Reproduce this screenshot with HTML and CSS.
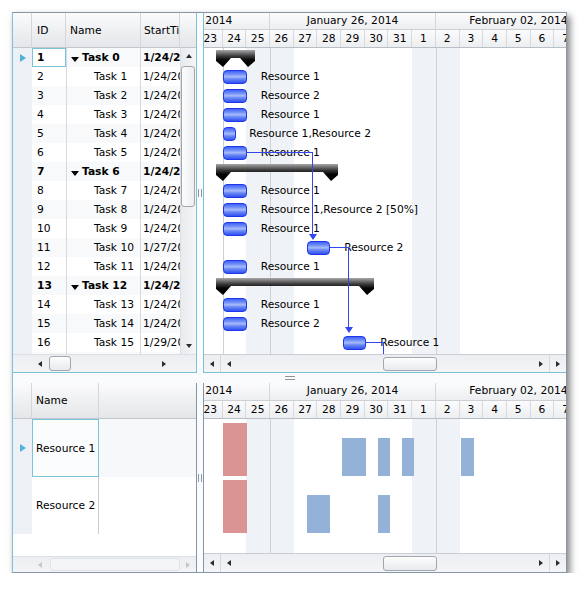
FILE: index.html
```html
<!DOCTYPE html>
<html>
<head>
<meta charset="utf-8">
<link rel="stylesheet" href="styles.css">
</head>
<body>
<div class="window">
  <div class="top">
    <div class="grid-pane focus">
      <div class="grid-head">
        <div class="hc w-rh"></div>
        <div class="hc w-id">ID</div>
        <div class="hc w-name">Name</div>
        <div class="hc w-start">StartTime</div>
        <div class="hc w-vs"></div>
      </div>
      <div class="grid-body">
        <div class="rows">
          <div class="row sum"><div class="cell w-rh"><span class="ind"></span></div><div class="cell w-id cur">1</div><div class="cell w-name l0"><span class="exp"></span>Task 0</div><div class="cell w-start">1/24/2014</div></div>
          <div class="row"><div class="cell w-rh"></div><div class="cell w-id">2</div><div class="cell w-name l1">Task 1</div><div class="cell w-start">1/24/2014</div></div>
          <div class="row"><div class="cell w-rh"></div><div class="cell w-id">3</div><div class="cell w-name l1">Task 2</div><div class="cell w-start">1/24/2014</div></div>
          <div class="row"><div class="cell w-rh"></div><div class="cell w-id">4</div><div class="cell w-name l1">Task 3</div><div class="cell w-start">1/24/2014</div></div>
          <div class="row"><div class="cell w-rh"></div><div class="cell w-id">5</div><div class="cell w-name l1">Task 4</div><div class="cell w-start">1/24/2014</div></div>
          <div class="row"><div class="cell w-rh"></div><div class="cell w-id">6</div><div class="cell w-name l1">Task 5</div><div class="cell w-start">1/24/2014</div></div>
          <div class="row sum"><div class="cell w-rh"></div><div class="cell w-id">7</div><div class="cell w-name l0"><span class="exp"></span>Task 6</div><div class="cell w-start">1/24/2014</div></div>
          <div class="row"><div class="cell w-rh"></div><div class="cell w-id">8</div><div class="cell w-name l1">Task 7</div><div class="cell w-start">1/24/2014</div></div>
          <div class="row"><div class="cell w-rh"></div><div class="cell w-id">9</div><div class="cell w-name l1">Task 8</div><div class="cell w-start">1/24/2014</div></div>
          <div class="row"><div class="cell w-rh"></div><div class="cell w-id">10</div><div class="cell w-name l1">Task 9</div><div class="cell w-start">1/24/2014</div></div>
          <div class="row"><div class="cell w-rh"></div><div class="cell w-id">11</div><div class="cell w-name l1">Task 10</div><div class="cell w-start">1/27/2014</div></div>
          <div class="row"><div class="cell w-rh"></div><div class="cell w-id">12</div><div class="cell w-name l1">Task 11</div><div class="cell w-start">1/24/2014</div></div>
          <div class="row sum"><div class="cell w-rh"></div><div class="cell w-id">13</div><div class="cell w-name l0"><span class="exp"></span>Task 12</div><div class="cell w-start">1/24/2014</div></div>
          <div class="row"><div class="cell w-rh"></div><div class="cell w-id">14</div><div class="cell w-name l1">Task 13</div><div class="cell w-start">1/24/2014</div></div>
          <div class="row"><div class="cell w-rh"></div><div class="cell w-id">15</div><div class="cell w-name l1">Task 14</div><div class="cell w-start">1/24/2014</div></div>
          <div class="row"><div class="cell w-rh"></div><div class="cell w-id">16</div><div class="cell w-name l1">Task 15</div><div class="cell w-start">1/29/2014</div></div>
          <div class="row"><div class="cell w-rh"></div><div class="cell w-id">17</div><div class="cell w-name l1">Task 16</div><div class="cell w-start">1/24/2014</div></div>
        </div>
        <div class="vscroll">
          <div class="vbtn"><span class="arr-u"></span></div>
          <div class="vtrack"><div class="vthumb"></div></div>
          <div class="vbtn"><span class="arr-d"></span></div>
        </div>
      </div>
      <div class="hs-row">
        <div class="hs-rh"></div>
        <div class="hscroll">
          <div class="sbtn"><span class="arr-l"></span></div>
          <div class="strack"><div class="sthumb grid-thumb"></div></div>
          <div class="sbtn"><span class="arr-r"></span></div>
        </div>
        <div class="hs-gap"></div>
      </div>
    </div>
    <div class="vsplit"><span class="grip-v"></span></div>
    <div class="gantt-pane focus">
      <div class="tl-head">
        <div class="track">
          <div class="months"><div class="mc">January 19, 2014</div><div class="mc">January 26, 2014</div><div class="mc">February 02, 2014</div></div>
          <div class="days"><div class="dc">19</div><div class="dc">20</div><div class="dc">21</div><div class="dc">22</div><div class="dc">23</div><div class="dc">24</div><div class="dc">25</div><div class="dc">26</div><div class="dc">27</div><div class="dc">28</div><div class="dc">29</div><div class="dc">30</div><div class="dc">31</div><div class="dc">1</div><div class="dc">2</div><div class="dc">3</div><div class="dc">4</div><div class="dc">5</div><div class="dc">6</div><div class="dc">7</div><div class="dc">8</div></div>
        </div>
      </div>
      <div class="tl-body">
        <div class="track canvas">
          <div class="shade" style="left:142.2px;width:47.4px"></div>
          <div class="shade" style="left:308.1px;width:47.4px"></div>
          <div class="vline" style="left:118.5px"></div>
          <div class="vline" style="left:165.9px"></div>
          <div class="vline" style="left:331.8px"></div>

          <svg class="summary" style="left:112px;top:2px" width="39" height="17" viewBox="0 0 39 17"><defs><linearGradient id="sg" x1="0" y1="0" x2="0" y2="1"><stop offset="0" stop-color="#a8a8a8"/><stop offset="0.35" stop-color="#3c3c3c"/><stop offset="0.6" stop-color="#050505"/><stop offset="1" stop-color="#000"/></linearGradient></defs><polygon points="0,0 39,0 39,11 32,17 24,8 15,8 7,17 0,11" fill="url(#sg)"/></svg>
          <div class="bar" style="left:119px;width:24px;top:22px"></div><div class="lbl" style="left:156.5px;top:19px">Resource 1</div>
          <div class="bar" style="left:119px;width:24px;top:41px"></div><div class="lbl" style="left:156.5px;top:38px">Resource 2</div>
          <div class="bar" style="left:119px;width:24px;top:60px"></div><div class="lbl" style="left:156.5px;top:57px">Resource 1</div>
          <div class="bar" style="left:119px;width:12.5px;top:79px"></div><div class="lbl" style="left:145px;top:76px">Resource 1,Resource 2</div>
          <div class="bar" style="left:119px;width:24px;top:98px"></div><div class="lbl" style="left:156.5px;top:95px">Resource 1</div>

          <svg class="summary" style="left:112px;top:116px" width="122" height="17" viewBox="0 0 122 17"><polygon points="0,0 122,0 122,11 115,17 107,8 15,8 7,17 0,11" fill="url(#sg)"/></svg>
          <div class="bar" style="left:119px;width:24px;top:136px"></div><div class="lbl" style="left:156.5px;top:133px">Resource 1</div>
          <div class="bar" style="left:119px;width:24px;top:155px"></div><div class="lbl" style="left:156.5px;top:152px">Resource 1,Resource 2 [50%]</div>
          <div class="bar" style="left:119px;width:24px;top:174px"></div><div class="lbl" style="left:156.5px;top:171px">Resource 1</div>
          <div class="bar" style="left:202.5px;width:23.5px;top:193px"></div><div class="lbl" style="left:240px;top:190px">Resource 2</div>
          <div class="bar" style="left:119px;width:24px;top:212px"></div><div class="lbl" style="left:156.5px;top:209px">Resource 1</div>

          <svg class="summary" style="left:112px;top:230px" width="158" height="17" viewBox="0 0 158 17"><polygon points="0,0 158,0 158,11 151,17 143,8 15,8 7,17 0,11" fill="url(#sg)"/></svg>
          <div class="bar" style="left:119px;width:24px;top:250px"></div><div class="lbl" style="left:156.5px;top:247px">Resource 1</div>
          <div class="bar" style="left:119px;width:24px;top:269px"></div><div class="lbl" style="left:156.5px;top:266px">Resource 2</div>
          <div class="bar" style="left:238.5px;width:23.5px;top:288px"></div><div class="lbl" style="left:276px;top:285px">Resource 1</div>

          <div class="hl" style="left:143px;width:65px;top:104px"></div>
          <div class="vl" style="left:208px;top:104px;height:83px"></div>
          <div class="arrow" style="left:204.5px;top:186px"></div>

          <div class="hl" style="left:226px;width:18px;top:199px"></div>
          <div class="vl" style="left:244px;top:199px;height:80px"></div>
          <div class="arrow" style="left:240.5px;top:279px"></div>

          <div class="hl" style="left:262px;width:17px;top:294px"></div>
          <div class="vl" style="left:279px;top:294px;height:20px"></div>
        </div>
      </div>
      <div class="gscroll">
        <div class="gbtn first"><span class="arr-l"></span></div>
        <div class="ginner">
          <div class="gbtn"><span class="arr-l"></span></div>
          <div class="gtrack"><div class="sthumb gantt-thumb"></div></div>
          <div class="gbtn"><span class="arr-r"></span></div>
        </div>
        <div class="gbtn last"><span class="arr-r"></span></div>
      </div>
    </div>
  </div>

  <div class="hsplit"><span class="grip-h"></span></div>

  <div class="bottom">
    <div class="res-pane">
      <div class="res-head">
        <div class="hc w-rh"></div>
        <div class="hc w-rname">Name</div>
        <div class="hc w-rest"></div>
      </div>
      <div class="res-row r1">
        <div class="cell w-rh"><span class="ind"></span></div>
        <div class="cell w-rname cur">Resource 1</div>
        <div class="cell w-rest"></div>
      </div>
      <div class="res-row r2">
        <div class="cell w-rh"></div>
        <div class="cell w-rname">Resource 2</div>
        <div class="cell w-rest"></div>
      </div>
      <div class="res-fill"></div>
      <div class="res-scroll">
        <div class="hs-rh"></div>
        <div class="sbtn dis"><span class="arr-l"></span></div>
        <div class="strack"><div class="sthumb dis-thumb"></div></div>
        <div class="sbtn dis"><span class="arr-r"></span></div>
      </div>
    </div>
    <div class="vsplit"><span class="grip-v"></span></div>
    <div class="rgantt-pane">
      <div class="tl-head rh36">
        <div class="track">
          <div class="months"><div class="mc">January 19, 2014</div><div class="mc">January 26, 2014</div><div class="mc">February 02, 2014</div></div>
          <div class="days"><div class="dc">19</div><div class="dc">20</div><div class="dc">21</div><div class="dc">22</div><div class="dc">23</div><div class="dc">24</div><div class="dc">25</div><div class="dc">26</div><div class="dc">27</div><div class="dc">28</div><div class="dc">29</div><div class="dc">30</div><div class="dc">31</div><div class="dc">1</div><div class="dc">2</div><div class="dc">3</div><div class="dc">4</div><div class="dc">5</div><div class="dc">6</div><div class="dc">7</div><div class="dc">8</div></div>
        </div>
      </div>
      <div class="tl-body rbody">
        <div class="track canvas">
          <div class="shade" style="left:142.2px;width:47.4px"></div>
          <div class="shade" style="left:308.1px;width:47.4px"></div>
          <div class="vline" style="left:165.9px"></div>
          <div class="vline" style="left:331.8px"></div>

          <div class="load over" style="left:119.1px;width:24px;top:4px;height:53px"></div>
          <div class="load" style="left:238.1px;width:23.7px;top:19px;height:38px"></div>
          <div class="load" style="left:273.8px;width:12.3px;top:19px;height:38px"></div>
          <div class="load" style="left:297.5px;width:12.6px;top:19px;height:38px"></div>
          <div class="load" style="left:357.1px;width:12.4px;top:19px;height:38px"></div>

          <div class="load over" style="left:119.1px;width:24px;top:61px;height:53px"></div>
          <div class="load" style="left:202.5px;width:23.6px;top:76px;height:38px"></div>
          <div class="load" style="left:273.8px;width:12.3px;top:76px;height:38px"></div>
        </div>
      </div>
      <div class="gscroll">
        <div class="gbtn first"><span class="arr-l"></span></div>
        <div class="ginner">
          <div class="gbtn"><span class="arr-l"></span></div>
          <div class="gtrack"><div class="sthumb gantt-thumb"></div></div>
          <div class="gbtn"><span class="arr-r"></span></div>
        </div>
        <div class="gbtn last"><span class="arr-r"></span></div>
      </div>
    </div>
  </div>
</div>
</body>
</html>
```

FILE: styles.css
```css
* { box-sizing: border-box; margin: 0; padding: 0; }
html, body { background: #fff; }
body {
  padding: 12px 0 0 12px;
  font-family: "DejaVu Sans", Verdana, sans-serif;
  font-size: 10.7px;
  color: #000;
}
.window {
  width: 555px;
  height: 561px;
  border: 1px solid #8796a6;
  border-left-color: #7dc0d9;
  box-shadow: 3px 4px 7px rgba(0, 0, 0, 0.5);
  display: flex;
  flex-direction: column;
  background: #fff;
  overflow: hidden;
}
.top { height: 360px; display: flex; flex: none; }
.bottom { height: 189px; display: flex; flex: none; }

/* splitters */
.vsplit {
  width: 6px;
  flex: none;
  background: #fafbfc;
  display: flex;
  align-items: center;
  justify-content: center;
}
.grip-v {
  width: 4px;
  height: 8px;
  border-left: 1px solid #8c939b;
  border-right: 1px solid #8c939b;
}
.hsplit {
  height: 10px;
  flex: none;
  background: #fafbfc;
  display: flex;
  align-items: center;
  justify-content: center;
}
.grip-h {
  width: 10px;
  height: 4px;
  border-top: 1px solid #8c939b;
  border-bottom: 1px solid #8c939b;
}

/* header cells */
.hc {
  background: linear-gradient(#fbfbfc, #eceef0 60%, #e4e6e9);
  border-right: 1px solid #d3d6da;
  border-bottom: 1px solid #c2c7cd;
  display: flex;
  align-items: center;
  padding-left: 4px;
  white-space: nowrap;
  overflow: hidden;
  flex: none;
}
.w-rh { width: 19px; }
.w-id { width: 34px; }
.w-name { width: 75px; }
.w-start { width: 39px; }
.w-vs { width: 16px; border-right: none; }
.grid-head .w-id { padding-left: 5px; }
.grid-head .w-start { padding-left: 3px; }

/* top grid */
.grid-pane {
  width: 184px;
  flex: none;
  display: flex;
  flex-direction: column;
  border-right: 1px solid #7dc0d9;
  border-bottom: 1px solid #7dc0d9;
}
.grid-head { height: 35px; display: flex; flex: none; }
.grid-body { height: 306px; display: flex; flex: none; overflow: hidden; }
.rows { width: 167px; overflow: hidden; }
.row { height: 19px; display: flex; }
.row:nth-child(even) { background: #fff; }
.row:nth-child(odd) { background: #f8f9fa; }
.cell {
  flex: none;
  height: 100%;
  display: flex;
  align-items: center;
  white-space: nowrap;
  overflow: hidden;
}
.row .w-rh { background: #edf0f4; }
.row .w-id { padding-left: 5px; }
.row .w-name { border-left: 1px solid #d6d9dd; border-right: 1px solid #d6d9dd; }
.row .w-start { padding-left: 2px; }
.l0 { padding-left: 4px; }
.l1 { padding-left: 27px; }
.sum { font-weight: bold; }
.exp {
  width: 0; height: 0;
  border-style: solid;
  border-width: 5px 4.5px 0 4.5px;
  border-color: #000 transparent transparent transparent;
  margin: 3px 3px 0 0;
}
.row .cur { border: 1px solid #7dc3db; padding-left: 4px; background: #fff; }
.ind {
  width: 0; height: 0;
  border-style: solid;
  border-width: 4.5px 0 4.5px 6px;
  border-color: transparent transparent transparent #4fb3d9;
  margin-left: 7px;
}

/* scrollbars */
.vscroll {
  width: 16px;
  flex: none;
  display: flex;
  flex-direction: column;
  background: linear-gradient(90deg, #e9ebee, #f4f5f7);
  border-left: 1px solid #dcdfe3;
}
.vbtn { height: 16px; flex: none; display: flex; align-items: center; justify-content: center; }
.vtrack { flex: 1; padding: 2px 1px 0 0; }
.vthumb {
  height: 141px;
  border: 1px solid #a1a7ae;
  border-radius: 3px;
  background: linear-gradient(90deg, #fdfdfd, #eceef0);
}
.hs-row { height: 18px; display: flex; flex: none; background: linear-gradient(#eceef1, #f3f4f6); border-top: 1px solid #dcdfe3; }
.hs-rh { width: 19px; flex: none; }
.hscroll { width: 139px; display: flex; flex: none; }
.hs-gap { flex: 1; }
.sbtn { width: 15px; flex: none; display: flex; align-items: center; justify-content: center; }
.strack { flex: 1; padding: 1px 0 1px 2px; display: flex; }
.sthumb {
  border: 1px solid #a1a7ae;
  border-radius: 3px;
  background: linear-gradient(#fdfdfd, #e8eaed);
}
.grid-thumb { width: 22px; }
.arr-l, .arr-r, .arr-u, .arr-d { width: 0; height: 0; border-style: solid; }
.arr-l { border-width: 3.5px 4px 3.5px 0; border-color: transparent #2b2b2b transparent transparent; }
.arr-r { border-width: 3.5px 0 3.5px 4px; border-color: transparent transparent transparent #2b2b2b; }
.arr-u { border-width: 0 3.5px 4px 3.5px; border-color: transparent transparent #2b2b2b transparent; }
.arr-d { border-width: 4px 3.5px 0 3.5px; border-color: #2b2b2b transparent transparent transparent; }
.dis .arr-l { border-right-color: #c3c7cc; }
.dis .arr-r { border-left-color: #c3c7cc; }

/* gantt */
.gantt-pane, .rgantt-pane {
  width: 363px;
  flex: none;
  display: flex;
  flex-direction: column;
  overflow: hidden;
}
.gantt-pane { border-left: 1px solid #7dc0d9; border-bottom: 1px solid #7dc0d9; }
.rgantt-pane { border-left: 1px solid #8796a6; }
.tl-head { height: 35px; flex: none; overflow: hidden; border-bottom: 1px solid #b9bfc6; }
.tl-head.rh36 { height: 36px; }
.track { width: 497.7px; margin-left: -99.8px; position: relative; }
.months { height: 17px; display: flex; }
.rh36 .months { height: 18px; }
.days { height: 17px; display: flex; }
.mc {
  width: 165.9px;
  flex: none;
  text-align: center;
  line-height: 16px;
  white-space: nowrap;
  background: linear-gradient(#fcfcfd, #eceef1);
  border-right: 1px solid #d3d6da;
  border-bottom: 1px solid #cdd1d6;
}
.dc {
  width: 23.7px;
  flex: none;
  text-align: center;
  line-height: 17px;
  background: linear-gradient(#fbfbfc, #eceef0);
  border-right: 1px solid #d6d9dd;
}
.tl-body { height: 306px; flex: none; overflow: hidden; position: relative; }
.tl-body.rbody { height: 134px; }
.canvas { height: 100%; }
.shade { position: absolute; top: 0; bottom: 0; background: #eff2f7; }
.vline { position: absolute; top: 0; bottom: 0; width: 1px; background: #cdd1d6; }
.bar {
  position: absolute;
  height: 14px;
  border: 1px solid #1f36f0;
  border-radius: 4px;
  background: linear-gradient(#3f62f5 0%, #7895f8 30%, #a8bcfa 48%, #6d8bf6 65%, #2f50ef 100%);
}
.lbl { position: absolute; line-height: 19px; white-space: nowrap; }
.summary { position: absolute; }
.hl { position: absolute; height: 1px; background: #3345f0; }
.vl { position: absolute; width: 1px; background: #3345f0; }
.arrow {
  position: absolute;
  width: 0; height: 0;
  border-style: solid;
  border-width: 6px 4px 0 4px;
  border-color: #3345f0 transparent transparent transparent;
}
.load { position: absolute; background: #94b2d7; }
.load.over { background: #d99493; }

.gscroll {
  height: 18px;
  flex: none;
  display: flex;
  background: linear-gradient(#eceef1, #f4f5f7);
  border-top: 1px solid #c9ced4;
}
.rgantt-pane .gscroll { height: 19px; }
.gbtn { width: 16px; flex: none; display: flex; align-items: center; justify-content: center; }
.gbtn.first { width: 17px; border-right: 1px solid #d5d9de; }
.gbtn.last { border-left: 1px solid #d5d9de; }
.ginner { width: 328px; flex: none; display: flex; }
.gtrack { flex: 1; padding: 2px 0 1px 146px; display: flex; }
.gantt-thumb { width: 54px; }

/* resources grid */
.res-pane {
  width: 184px;
  flex: none;
  display: flex;
  flex-direction: column;
  border-right: 1px solid #8796a6;
}
.res-head { height: 36px; display: flex; flex: none; }
.w-rname { width: 67px; }
.w-rest { flex: 1; border-right: none; }
.res-head .w-rname { padding-left: 4px; }
.res-row { display: flex; flex: none; }
.res-row.r1 { height: 58px; }
.res-row.r2 { height: 57px; }
.res-row .w-rh { background: #edf0f4; }
.res-row .w-rname { border-right: 1px solid #c9cdd2; padding-left: 4px; }
.res-row .w-rest { flex: 1; }
.res-row.r1 .w-rest { background: #f6f8fa; }
.res-row.r1 .w-rname { background: #fbfcfd; border: 1px solid #7dc3db; padding-left: 3px; }
.res-fill { height: 22px; flex: none; }
.res-scroll {
  height: 16px;
  flex: none;
  display: flex;
  background: linear-gradient(#eceef1, #f3f4f6);
  border-top: 1px solid #dcdfe3;
}
.res-scroll .sbtn { width: 16px; }
.dis-thumb { flex: 1; border-color: #e0e3e6; background: #f4f5f7; }
```
